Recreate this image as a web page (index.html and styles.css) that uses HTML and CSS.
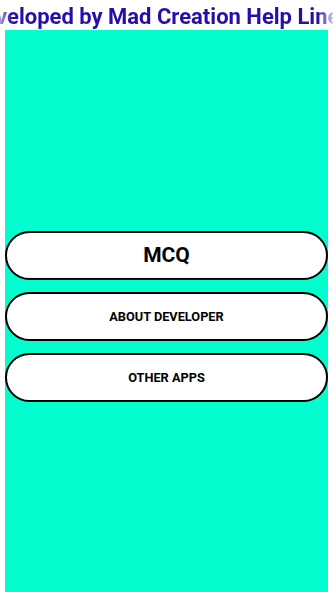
FILE: index.html
```html
<!DOCTYPE html>
<html lang="en">
<head>
    <meta charset="UTF-8">
    <meta name="viewport" content="width=device-width, initial-scale=1.0">
    <title>MCQ</title>
    <link rel="stylesheet" href="styles.css">
</head>
<body>

<div class="ticker">
    <div class="ticker-text">Developed by Mad Creation Help Line</div>
</div>

<div class="panel">
    <div class="menu">
        <button class="btn btn-big">MCQ</button>
        <button class="btn">ABOUT DEVELOPER</button>
        <button class="btn">OTHER APPS</button>
    </div>
</div>

</body>
</html>
```

FILE: styles.css
```css
html, body {
    height: 100%;
}
body {
    font-family: Roboto, "Noto Sans", sans-serif;
    background-color: white;
    margin: 0;
    display: flex;
    flex-direction: column;
}
.ticker {
    height: 30px;
    overflow: hidden;
    white-space: nowrap;
    -webkit-mask-image: linear-gradient(to right, rgba(0,0,0,0.4) 0, #000 12px, #000 318px, rgba(0,0,0,0.2) 333px);
    mask-image: linear-gradient(to right, rgba(0,0,0,0.4) 0, #000 12px, #000 318px, rgba(0,0,0,0.2) 333px);
}
.ticker-text {
    font-size: 22px;
    font-weight: bold;
    color: #2410a8;
    line-height: 30px;
    margin-left: -30px;
    margin-top: 2px;
}
.panel {
    flex: 1;
    background-color: #02fdcf;
    margin: 0 5px;
    display: flex;
    flex-direction: column;
    justify-content: center;
    padding-top: 10px;
}
.menu {
    display: flex;
    flex-direction: column;
    gap: 12px;
}
.btn {
    height: 49px;
    background: white;
    border: 2px solid black;
    border-radius: 25px;
    font-family: Roboto, sans-serif;
    font-size: 12.75px;
    font-weight: bold;
    color: black;
    padding: 0;
}
.btn-big {
    font-size: 21px;
}
```
